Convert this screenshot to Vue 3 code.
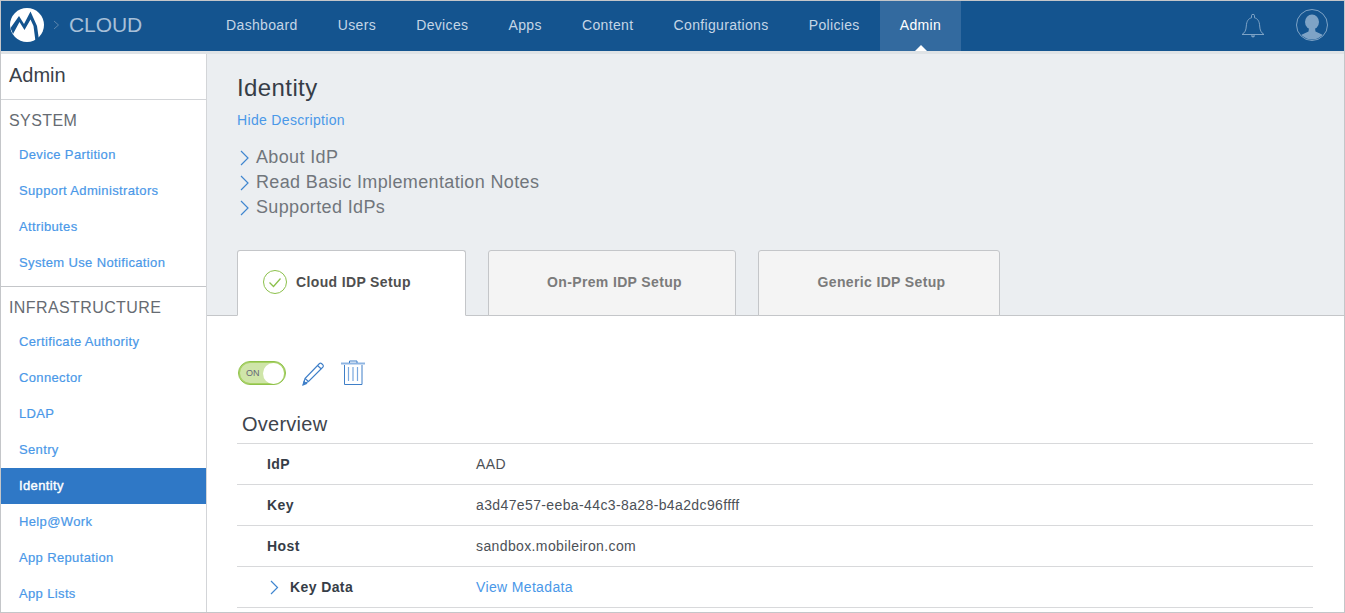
<script setup>
const navItems = [
  { label: 'Dashboard' }, { label: 'Users' }, { label: 'Devices' }, { label: 'Apps' },
  { label: 'Content' }, { label: 'Configurations' }, { label: 'Policies' }, { label: 'Admin', active: true }
]
const system = ['Device Partition', 'Support Administrators', 'Attributes', 'System Use Notification']
const infra = ['Certificate Authority', 'Connector', 'LDAP', 'Sentry', 'Identity', 'Help@Work', 'App Reputation', 'App Lists']
const notes = ['About IdP', 'Read Basic Implementation Notes', 'Supported IdPs']
const rows = [
  { k: 'IdP', v: 'AAD' },
  { k: 'Key', v: 'a3d47e57-eeba-44c3-8a28-b4a2dc96ffff' },
  { k: 'Host', v: 'sandbox.mobileiron.com' }
]
</script>

<template>
  <div class="frame">
    <header class="topbar">
      <div class="brand">
        <svg class="logo" width="34" height="34" viewBox="0 0 34 34">
          <circle cx="17" cy="17" r="17" fill="#fff" />
          <path d="M0.500 20 L9 8 L14 16 L20.500 3.500 L27 18 L29 32 L25.500 33.500 L23.500 18 L20.500 11.500 L14.500 22 L9.500 14 L3 26 Z" fill="#14548f" />
        </svg>
        <svg class="crumb" width="7" height="10" viewBox="0 0 7 10"><path d="M1 1l4.500 4L1 9" fill="none" stroke="#5c86ad" stroke-width="1" /></svg>
        <span class="cloud">CLOUD</span>
      </div>
      <nav class="nav">
        <a v-for="n in navItems" :key="n.label" class="nav-item" :class="{ active: n.active }">{{ n.label }}</a>
      </nav>
      <div class="top-icons">
        <svg width="24" height="26" viewBox="0 0 24 26" fill="none" stroke="#7ea3c6" stroke-width="1">
          <path d="M1 22.500c3-2 4-4 4.300-8.500C5.600 9 7.500 6.500 10.500 5.800V3.800a1.500 1.500 0 0 1 3 0v2C16.500 6.500 18.400 9 18.700 14c.3 4.500 1.300 6.500 4.300 8.500z" />
          <path d="M10.500 23.500a1.500 1.500 0 0 0 3 0" fill="#7ea3c6" />
        </svg>
        <svg width="32" height="32" viewBox="0 0 32 32">
          <defs><clipPath id="avatar-clip"><circle cx="16" cy="16" r="14.500" /></clipPath></defs>
          <circle cx="16" cy="16" r="15.500" fill="none" stroke="#7ea3c6" stroke-width="1" />
          <g clip-path="url(#avatar-clip)" fill="#7ea3c6">
            <ellipse cx="16" cy="13" rx="7" ry="7.500" />
            <path d="M13 19h6l.5 3.500L27 26v6H5v-6l7.500-3.500z" />
          </g>
        </svg>
      </div>
    </header>
    <div class="strip"></div>
    <div class="body">
      <aside class="side">
        <div class="side-title">Admin</div>
        <div class="side-section">
          <div class="side-head">SYSTEM</div>
          <a v-for="s in system" :key="s" class="side-link">{{ s }}</a>
        </div>
        <div class="side-section infra">
          <div class="side-head">INFRASTRUCTURE</div>
          <a v-for="s in infra" :key="s" class="side-link" :class="{ current: s === 'Identity' }">{{ s }}</a>
        </div>
      </aside>
      <main class="main">
        <section class="intro">
          <h1 class="title">Identity</h1>
          <a class="hide">Hide Description</a>
          <ul class="notes">
            <li v-for="n in notes" :key="n">
              <svg width="9" height="16" viewBox="0 0 9 16"><path d="M1 1l7 7-7 7" fill="none" stroke="#3f86d0" stroke-width="1.200" /></svg>
              <span>{{ n }}</span>
            </li>
          </ul>
          <div class="tabs">
            <div class="tab tab-active">
              <svg width="24" height="24" viewBox="0 0 24 24" fill="none" stroke="#8cc04b">
                <circle cx="12" cy="12" r="11.500" />
                <path d="M6.500 12.500l4 4 7-8" stroke-width="1.300" />
              </svg>
              <span>Cloud IDP Setup</span>
            </div>
            <div class="tab tab-2"><span>On-Prem IDP Setup</span></div>
            <div class="tab tab-3"><span>Generic IDP Setup</span></div>
          </div>
        </section>
        <section class="panel">
          <div class="tools">
            <div class="toggle"><span>ON</span><i class="knob"></i></div>
            <svg width="26" height="26" viewBox="0 0 26 26" fill="none" stroke="#3f7fc8" stroke-width="1.100">
              <path d="M5 18.500L19.500 3.500a1.500 1.500 0 0 1 2 0l1.500 1.500a1.500 1.500 0 0 1 0 2L8.500 21.500 3.500 24z" />
              <path d="M17.500 5.500l3.800 3.500M5 18.500l3.500 3" />
              <path d="M3 25l1-3.500 2.500 2z" fill="#3f7fc8" />
            </svg>
            <svg class="trash" width="25" height="26" viewBox="0 0 25 26" fill="none" stroke="#3f7fc8" stroke-width="1">
              <path d="M1 3.500h24" stroke="#8fb5e2" stroke-width="2" />
              <path d="M9.500 3V1h7.500v2" />
              <path d="M4.500 5v19.500h17.500V5" />
              <path d="M8.500 7v14M13 7v14M17.500 7v14" stroke="#7aa8de" stroke-width="1.200" />
            </svg>
          </div>
          <h2 class="overview">Overview</h2>
          <div class="table">
            <div v-for="r in rows" :key="r.k" class="row">
              <div class="key">{{ r.k }}</div>
              <div class="val">{{ r.v }}</div>
            </div>
            <div class="row">
              <div class="key key-exp">
                <svg width="9" height="15" viewBox="0 0 9 15"><path d="M1 1l6.500 6.500L1 14" fill="none" stroke="#3f86d0" stroke-width="1.200" /></svg>
                <span>Key Data</span>
              </div>
              <div class="val link">View Metadata</div>
            </div>
          </div>
        </section>
      </main>
    </div>
  </div>
</template>

<style scoped>
.frame {
  height: 613px;
  box-sizing: border-box;
  border: 1px solid #c4c6c9;
  display: flex;
  flex-direction: column;
  overflow: hidden;
  font-family: "Liberation Sans", Arial, sans-serif;
  background: #fff;
}
.topbar {
  height: 50px;
  flex: none;
  background: #14548f;
  display: flex;
  align-items: center;
}
.brand {
  width: 205px;
  flex: none;
  display: flex;
  align-items: center;
  padding: 0 0 3px 9px;
  box-sizing: border-box;
}
.crumb { margin-left: 9px; }
.cloud {
  margin-left: 9px;
  font-size: 21px;
  color: #a8c0d8;
  letter-spacing: -0.1px;
}
.nav { display: flex; align-self: stretch; }
.nav-item {
  padding: 0 20.120px 3px;
  display: flex;
  align-items: center;
  font-size: 14px;
  letter-spacing: 0.33px;
  color: #c5d6e6;
  position: relative;
}
.nav-item.active {
  background: #336a9f;
  color: #fff;
}
.nav-item.active::after {
  content: "";
  position: absolute;
  left: 50%;
  bottom: 0;
  margin-left: -6px;
  border: 6px solid transparent;
  border-top: 0;
  border-bottom-color: #fff;
}
.top-icons {
  margin-left: auto;
  display: flex;
  align-items: center;
  gap: 31px;
  padding: 0 16px 3px 0;
}
.strip { height: 3px; flex: none; background: #dfe3e6; }
.body { flex: 1; display: flex; min-height: 0; }
.side {
  width: 206px;
  flex: none;
  box-sizing: border-box;
  border-right: 1px solid #d3d5d8;
  background: #fff;
}
.side-title {
  height: 46px;
  box-sizing: border-box;
  border-bottom: 1px solid #d3d5d8;
  padding: 9px 0 0 8px;
  font-size: 20px;
  line-height: 24px;
  color: #3a4149;
}
.side-section { padding-bottom: 5px; }
.infra { border-top: 1px solid #c4c6c9; }
.side-head {
  height: 37px;
  box-sizing: border-box;
  padding: 11px 0 0 8px;
  font-size: 16px;
  line-height: 19px;
  letter-spacing: 0.4px;
  color: #666b72;
}
.side-link {
  display: block;
  height: 36px;
  line-height: 36px;
  padding-left: 18px;
  font-size: 13px;
  letter-spacing: 0.36px;
  color: #4a98e8;
  -webkit-text-stroke: 0.2px #4a98e8;
}
.side-link.current {
  background: #2f78c6;
  color: #fff;
  -webkit-text-stroke: 0.4px #fff;
}
.main { flex: 1; min-width: 0; background: #fff; display: flex; flex-direction: column; }
.intro {
  background: #ebeef1;
  padding: 19px 0 0 30px;
  border-bottom: 1px solid #c4c6c9;
  height: 262px;
  box-sizing: border-box;
  display: flex;
  flex-direction: column;
}
.title {
  margin: 0;
  font-size: 24px;
  line-height: 30px;
  font-weight: 400;
  letter-spacing: 0.4px;
  color: #363d47;
}
.hide {
  margin-top: 8px;
  font-size: 14px;
  line-height: 18px;
  letter-spacing: 0.33px;
  color: #4a98e8;
}
.notes {
  list-style: none;
  margin: 16px 0 0;
  padding: 0;
}
.notes li {
  height: 25px;
  display: flex;
  align-items: center;
  padding-left: 3px;
  gap: 7px;
  font-size: 18px;
  letter-spacing: 0.36px;
  color: #71767c;
}
.tabs {
  margin-top: auto;
  display: flex;
  gap: 22px;
  height: 66px;
  margin-bottom: -1px;
}
.tab {
  box-sizing: border-box;
  background: #f4f4f4;
  border: 1px solid #c4c6c9;
  border-radius: 3px 3px 0 0;
  display: flex;
  align-items: center;
  justify-content: center;
  padding: 0 0 2px 5px;
  font-size: 14px;
  font-weight: 700;
  letter-spacing: 0.36px;
  color: #7b7b7b;
}
.tab-active {
  width: 229px;
  background: #fff;
  border-bottom-color: #fff;
  color: #4f4f4f;
  justify-content: flex-start;
  padding-left: 25px;
  gap: 9px;
}
.tab-2 { width: 248px; }
.tab-3 { width: 242px; }
.panel { flex: 1; padding: 0 31px 0 30px; }
.tools {
  height: 26px;
  margin-top: 44px;
  padding-left: 1px;
  display: flex;
  align-items: center;
}
.toggle {
  width: 48px;
  height: 24px;
  box-sizing: border-box;
  border: 1px solid #8fc24a;
  border-radius: 12px;
  background: #cfe5a9;
  display: flex;
  align-items: center;
  justify-content: space-between;
  padding: 0 0 0 7px;
  font-size: 9px;
  color: #667;
  box-shadow: inset 0 0 0 1px #a8d164;
}
.knob {
  width: 21px;
  height: 21px;
  border-radius: 50%;
  background: #fff;
  margin-right: 1px;
}
.toggle + svg { margin-left: 14px; }
.trash { margin-left: 14px; }
.overview {
  margin: 21px 0 0;
  padding-left: 5px;
  height: 36px;
  line-height: 35px;
  font-size: 20px;
  font-weight: 400;
  letter-spacing: 0.25px;
  color: #3e444c;
  border-bottom: 1px solid #d8d9db;
}
.row {
  height: 41px;
  box-sizing: border-box;
  border-bottom: 1px solid #d8d9db;
  display: flex;
  align-items: center;
  font-size: 14px;
  letter-spacing: 0.38px;
}
.key {
  width: 239px;
  padding-left: 30px;
  box-sizing: border-box;
  font-weight: 700;
  letter-spacing: 0.4px;
  color: #363d47;
}
.key-exp { display: flex; align-items: center; gap: 11px; padding-left: 33px; }
.val { color: #4c5157; }
.link { color: #4a98e8; letter-spacing: 0.35px; }
</style>
